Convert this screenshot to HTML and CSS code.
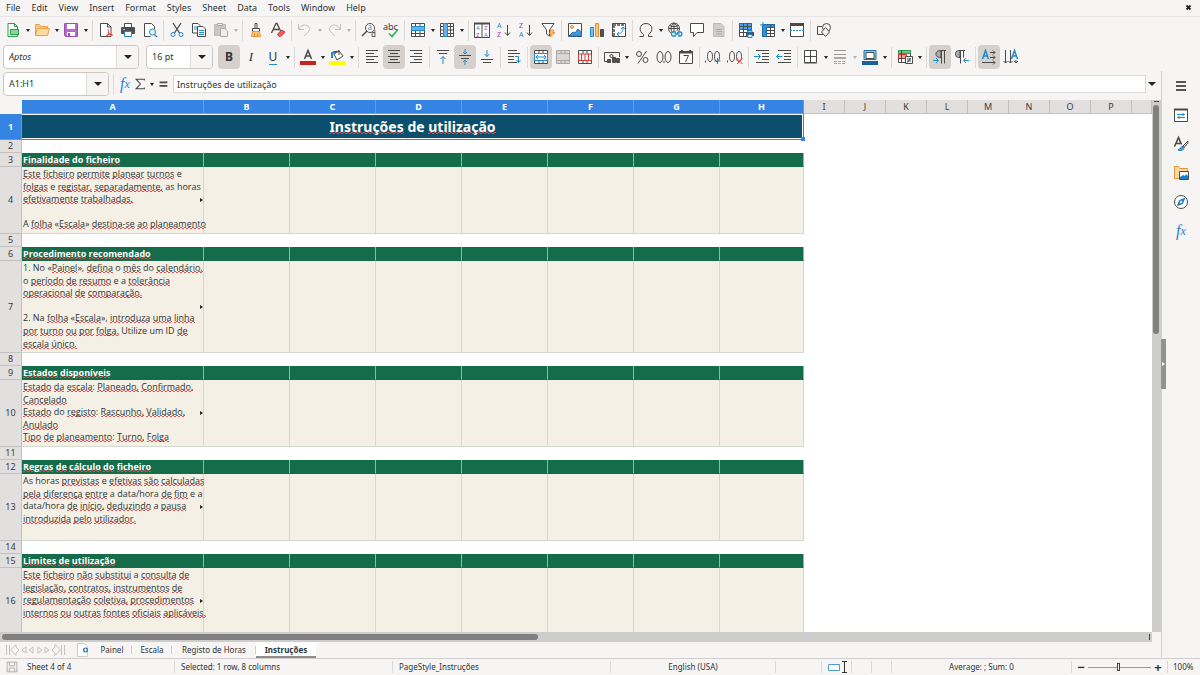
FILE: index.html
```html
<!DOCTYPE html>
<html lang="pt">
<head>
<meta charset="utf-8">
<title>Instruções</title>
<link rel="stylesheet" href="styles.css">
</head>
<body>
<nav class="menubar">
  <button>File</button><button>Edit</button><button>View</button><button>Insert</button><button>Format</button><button>Styles</button><button>Sheet</button><button>Data</button><button>Tools</button><button>Window</button><button>Help</button>
  <button class="close" aria-label="Close document"><svg viewBox="0 0 8 8" width="8" height="8"><path d="M1.500 1.500l4 4M5.500 1.500l-4 4" stroke="#222" stroke-width="1.800"/></svg></button>
</nav>

<div class="toolbar standard" role="toolbar" aria-label="Standard">
  <button class="tool" aria-label="New"><svg class="ico" viewBox="0 0 16 16"><path class="g" fill="#fff" d="M3 1.500h6.500l3 3v10H3z"/><path class="g" d="M9.500 1.500v3h3"/><path fill="#2a9f4a" stroke="none" d="M5 7h9v6H5z"/><path stroke="#fff" d="M6 9h7M6 11h7"/></svg></button><button class="drop" aria-label="New options"></button>
  <button class="tool" aria-label="Open"><svg class="ico" viewBox="0 0 16 16"><path stroke="#e8a04a" fill="#fbc77a" d="M1.500 13.500v-11h4l1.500 2h6.500v2"/><path stroke="#e8a04a" fill="#fddaa0" d="M1.500 13.500l2-7h12l-2 7z"/></svg></button><button class="drop" aria-label="Open options"></button>
  <button class="tool" aria-label="Save"><svg class="ico" viewBox="0 0 16 16"><path stroke="#9b4fb0" fill="#b56bc8" d="M1.500 1.500h13v13h-12l-1-1z"/><path stroke="none" fill="#fff" d="M4 2h8v5H4zM4 10h8v4H4z"/><path stroke="none" fill="#9b4fb0" d="M5 11h2v3H5z"/></svg></button><button class="drop" aria-label="Save options"></button>
  <i class="sep"></i>
  <button class="tool" aria-label="Export PDF"><svg class="ico" viewBox="0 0 16 16"><path fill="#fff" d="M2.500 1.500h7l3.500 3.500v9.500H2.500z"/><path d="M9.500 1.500V5H13"/><path stroke="#e03c3c" d="M10 7c1 2 1 5-2 8M10 10c1 2 3 3 5 3M8 14c2-2 4-2 6-1"/></svg></button>
  <button class="tool" aria-label="Print"><svg class="ico" viewBox="0 0 16 16"><path fill="#fff" d="M4.500 5V1.500h7V5"/><rect x="1" y="5" width="14" height="7" rx="1" fill="#4a4f55" stroke="none"/><path fill="#fff" stroke="#1e8bcd" d="M4.500 9.500h7v5h-7z"/><path stroke="#9ac9ea" d="M3 7.500h2"/></svg></button>
  <button class="tool" aria-label="Print preview"><svg class="ico" viewBox="0 0 16 16"><path fill="#fff" d="M12.500 7V4.500l-3-3h-7v13h6"/><circle class="b" cx="10.500" cy="10" r="3" fill="#e4f2fc"/><path class="b" stroke-width="1.500" d="M12.500 12.500l2.500 2.500"/></svg></button>
  <i class="sep"></i>
  <button class="tool" aria-label="Cut"><svg class="ico" viewBox="0 0 16 16"><path stroke-width="1.300" d="M4 1l6.500 10M12 1L5.500 11"/><circle class="b" cx="4" cy="12.500" r="2"/><circle class="b" cx="12" cy="12.500" r="2"/></svg></button>
  <button class="tool" aria-label="Copy"><svg class="ico" viewBox="0 0 16 16"><path fill="#fff" d="M1.500 1.500h5.500l2 2v7.500H1.500z"/><path fill="#fff" d="M6.500 4.500H12l2.500 2.500v7.500h-8z"/><path class="b" d="M3 5h3M3 7h3M8 8.500h5M8 10.500h5M8 12.500h5"/></svg></button>
  <button class="tool" aria-label="Paste" disabled><svg class="ico" viewBox="0 0 16 16"><path stroke="#bbb" fill="#c9c8c6" d="M1.500 2.500h11v11h-11z"/><path stroke="#aaa" fill="#eee" d="M4.500 1.500h5v2h-5zM7.500 6.500h4l3 2.500v5.500h-7z"/></svg></button><button class="drop" aria-label="Paste options" disabled></button>
  <i class="sep"></i>
  <button class="tool" aria-label="Clone formatting"><svg class="ico" viewBox="0 0 16 16"><path fill="#fff" d="M7 1.500h2v5H7zM4.500 6.500h7v3h-7z"/><path stroke="#e8903a" fill="#fbc77a" d="M4.500 9.500h7l1 5h-9z"/><path stroke="#e8903a" d="M6.500 11v3M9.500 11v3"/></svg></button>
  <button class="tool" aria-label="Clear formatting"><svg class="ico" viewBox="0 0 16 16"><path stroke-width="1.300" d="M1.500 11L6 1.500h1L10.500 9M3 7.500h6"/><path stroke="#d93636" fill="#e86464" d="M7.500 12l4.500-4 3 2-4.500 4.500H9z"/></svg></button>
  <i class="sep"></i>
  <button class="tool" aria-label="Undo" disabled><svg class="ico dim" viewBox="0 0 16 16"><path d="M1.500 2v5.500H7M2 7c2-4 6-5 9-3 3 3 1 6-4 10"/></svg></button><button class="drop" aria-label="Undo options" disabled></button>
  <button class="tool" aria-label="Redo" disabled><svg class="ico dim" viewBox="0 0 16 16"><path d="M14.500 2v5.500H9M14 7c-2-4-6-5-9-3-3 3-1 6 4 10"/></svg></button><button class="drop" aria-label="Redo options" disabled></button>
  <i class="sep"></i>
  <button class="tool" aria-label="Find and replace"><svg class="ico" viewBox="0 0 16 16"><circle cx="9" cy="6" r="4.500" fill="#fff"/><path stroke-width="1.500" d="M6 9l-5 5"/><text class="gb" x="6.500" y="8" font-size="8">a</text><text class="gk" x="10" y="15" font-size="8">d</text></svg></button>
  <button class="tool" aria-label="Spelling"><svg class="ico" viewBox="0 0 16 16"><text class="gk" x="0" y="7.500" font-size="9">abc</text><path stroke="#2fae60" stroke-width="1.600" d="M6 11.500l3 3 6-7"/></svg></button>
  <i class="sep"></i>
  <button class="tool" aria-label="Row"><svg class="ico" viewBox="0 0 16 16"><path fill="#fff" d="M1.500 1.500h13v13h-13z"/><path d="M1.500 11.500h13M1.500 8.500h13M5.500 1.500v13M10 1.500v13"/><path fill="#62b1ea" stroke="#1e8bcd" d="M1.500 4.500h13v4h-13z"/></svg></button><button class="drop" aria-label="Row options"></button>
  <button class="tool" aria-label="Column"><svg class="ico" viewBox="0 0 16 16"><path fill="#fff" d="M1.500 1.500h13v13h-13z"/><path d="M1.500 4.500h13M1.500 8h13M1.500 11.500h13M11.500 1.500v13"/><path fill="#62b1ea" stroke="#1e8bcd" d="M4.500 1.500h4v13h-4z"/></svg></button><button class="drop" aria-label="Column options"></button>
  <i class="sep"></i>
  <button class="tool" aria-label="Sort"><svg class="ico" viewBox="0 0 16 16"><path fill="#fff" d="M.5 1.500h15v14H.5zM8 2v13"/><path stroke-width="2" d="M0 1.500h16"/><text class="gb" x="2" y="8" font-size="6">A</text><text class="gp" x="2" y="15" font-size="6">Z</text><text class="gp" x="10" y="8" font-size="6">Z</text><text class="gb" x="10" y="15" font-size="6">A</text></svg></button>
  <button class="tool" aria-label="Sort ascending"><svg class="ico" viewBox="0 0 16 16"><text class="gb" x="1" y="6" font-size="7">A</text><text class="gp" x="1" y="15" font-size="7">Z</text><path d="M11.500 3v10M9 10.500l2.500 3 2.500-3"/></svg></button>
  <button class="tool" aria-label="Sort descending"><svg class="ico" viewBox="0 0 16 16"><text class="gp" x="1" y="6" font-size="7">Z</text><text class="gb" x="1" y="15" font-size="7">A</text><path d="M11.500 3v10M9 10.500l2.500 3 2.500-3"/></svg></button>
  <button class="tool" aria-label="AutoFilter"><svg class="ico" viewBox="0 0 16 16"><path fill="#fff" d="M2 1.500h12L9.500 8v6l-3-2V8z"/><path stroke="#e8903a" fill="#fbc77a" d="M11 8h3l-1.500 2.500H15L10 15l1-3.500H9.500z"/></svg></button>
  <i class="sep"></i>
  <button class="tool" aria-label="Insert image"><svg class="ico" viewBox="0 0 16 16"><path fill="#fff" d="M1.500 1.500h13v13h-13z"/><circle cx="5" cy="5" r="1.500" fill="#fbc77a" stroke="#e8903a"/><path stroke="#1e6fb0" fill="#3f9be0" d="M2 14l4-4 2 1 3-4 3.500 4v3z"/></svg></button>
  <button class="tool" aria-label="Insert chart"><svg class="ico" viewBox="0 0 16 16"><path fill="#7dbff0" stroke="#1e8bcd" d="M1.500 5.500h3v9h-3z"/><path fill="#fbc77a" stroke="#e8903a" d="M6.500 1.500h3v13h-3z"/><path fill="#555" d="M11.500 7.500h3v7h-3z"/></svg></button>
  <button class="tool" aria-label="Pivot table"><svg class="ico" viewBox="0 0 16 16"><path fill="#fff" d="M1.500 1.500h13v13h-13z"/><path stroke="#777" stroke-width="2" stroke-dasharray="3 1" d="M2 3h12M3 3v11"/><path class="b" d="M6 12c4 0 6-2 6-6M10 7l2-2 2 2M8 10l-2 2 2 2"/></svg></button>
  <i class="sep"></i>
  <button class="tool" aria-label="Special character"><svg class="ico" viewBox="0 0 16 16"><path d="M1.500 14.500h4v-2C0 9 1.500 1.500 8 1.500S16 9 10.500 12.500v2h4"/></svg></button><button class="drop" aria-label="Special character options"></button>
  <button class="tool" aria-label="Hyperlink"><svg class="ico" viewBox="0 0 16 16"><circle cx="7" cy="6.500" r="5.500"/><path d="M1.500 6.500h11M7 1v11M3 3.500c3 1.500 5 1.500 8 0M7 1C3 4 3 9 7 12M7 1c4 3 4 6 3 8"/><path class="b" stroke-width="1.300" fill="#f6f5f4" d="M9 10H6c-2 0-2 4 0 4h3M11 10h2c2.500 0 2.500 4 0 4h-2M7.500 12h5"/></svg></button>
  <button class="tool" aria-label="Comment"><svg class="ico" viewBox="0 0 16 16"><path fill="#fff" d="M1.500 1.500h13v9H8l-3.500 4v-4h-3z"/></svg></button>
  <button class="tool" aria-label="Headers and footers" disabled><svg class="ico" viewBox="0 0 16 16"><path stroke="#bbb" fill="#d0cfcd" d="M2.500 1.500h7.500l3 3v10H2.500z"/><path stroke="#aaa" d="M5 7.500h6M5 9.500h6M5 12h6"/></svg></button>
  <i class="sep"></i>
  <button class="tool" aria-label="Print area"><svg class="ico" viewBox="0 0 16 16"><path fill="#fff" d="M1.500 1.500h12v13h-12z"/><path fill="#4aa3e8" stroke="#1e6fb0" d="M1.500 1.500h12v6h-12z"/><path d="M1.500 4.500h12M1.500 10.500h12M5.500 1.500v13M9.500 1.500v8"/><path fill="#4a4f55" stroke="none" d="M8 10h8v4H8z"/><path fill="#fff" stroke="#1e8bcd" d="M10 12.500h4v3h-4zM10 8.500h4V10h-4z"/></svg></button>
  <button class="tool" aria-label="Freeze rows and columns"><svg class="ico" viewBox="0 0 16 16"><path fill="#fff" d="M2.500 2.500h12v12h-12z"/><path fill="#2f8fdb" stroke="#1a6aa8" d="M2.500 2.500h12v3h-8v9h-4z"/><path d="M6.500 8.500h8M6.500 11.500h8M10.500 2.500v12"/><path class="b" d="M3 0v5M0 3h5"/></svg></button><button class="drop" aria-label="Freeze options"></button>
  <button class="tool" aria-label="Split window"><svg class="ico" viewBox="0 0 16 16"><path fill="#fff" d="M1.500 2v12.500h13V2"/><path stroke-width="3" d="M1 2.500h14"/><path class="b" stroke-dasharray="2 1" d="M1 8.500h14"/></svg></button>
  <i class="sep"></i>
  <button class="tool" aria-label="Show draw functions"><svg class="ico" viewBox="0 0 16 16"><path d="M7 12.500H1.500v-8H6"/><circle cx="10.500" cy="5.500" r="4"/><path fill="#f6f5f4" d="M9.500 5.500l4 4.500-4 4.500L5.500 10z"/></svg></button>
</div>

<div class="toolbar formatting" role="toolbar" aria-label="Formatting">
  <div class="combo font"><input aria-label="Font name" value="Aptos"><button aria-label="Choose font"></button></div>
  <div class="combo size"><input aria-label="Font size" value="16 pt"><button aria-label="Choose size"></button></div>
  <button class="tool on bold" aria-label="Bold">B</button>
  <button class="tool italic" aria-label="Italic">I</button>
  <button class="tool under" aria-label="Underline"><span>U</span></button><button class="drop" aria-label="Underline options"></button>
  <i class="sep"></i>
  <button class="tool" aria-label="Font colour"><svg class="ico" viewBox="0 0 16 16"><path stroke-width="1.500" d="M4.500 10L8 1.500 11.500 10M5.500 7h5"/><path stroke="none" fill="#c9211e" d="M0 12h16v4H0z"/></svg></button><button class="drop" aria-label="Font colour options"></button>
  <button class="tool" aria-label="Highlighting"><svg class="ico" viewBox="0 0 16 16"><path class="b" stroke-width="2" d="M3 9V4l4-1"/><path fill="#fff" d="M5 5l5-3 4 5-6 4z"/><path d="M10 1v5M4 3l6-1"/><path stroke="none" fill="#ff0" d="M0 12h16v4H0z"/></svg></button><button class="drop" aria-label="Highlighting options"></button>
  <i class="sep"></i>
  <button class="tool" aria-label="Align left"><svg class="ico" viewBox="0 0 16 16"><path d="M2 1.500h12M2 4.500h8M2 7.500h12M2 10.500h8M2 13.500h12"/></svg></button>
  <button class="tool on" aria-label="Align centre"><svg class="ico" viewBox="0 0 16 16"><path d="M2 1.500h12M4 4.500h8M2 7.500h12M4 10.500h8M2 13.500h12"/></svg></button>
  <button class="tool" aria-label="Align right"><svg class="ico" viewBox="0 0 16 16"><path d="M2 1.500h12M6 4.500h8M2 7.500h12M6 10.500h8M2 13.500h12"/></svg></button>
  <i class="sep"></i>
  <button class="tool" aria-label="Align top"><svg class="ico" viewBox="0 0 16 16"><path d="M2 1.500h12M4 4.500h8"/><path class="b" d="M8 15V7.500M5.500 10L8 7.500l2.500 2.500"/></svg></button>
  <button class="tool on" aria-label="Centre vertically"><svg class="ico" viewBox="0 0 16 16"><path d="M2 6.500h12M4 9.500h8"/><path class="b" d="M8 0v5M6 3l2 2 2-2M8 16v-5M6 13l2-2 2 2"/></svg></button>
  <button class="tool" aria-label="Align bottom"><svg class="ico" viewBox="0 0 16 16"><path d="M2 10.500h12M4 13.500h8"/><path class="b" d="M8 1v6.500M5.500 5L8 7.500 10.500 5"/></svg></button>
  <i class="sep"></i>
  <button class="tool" aria-label="Wrap text"><svg class="ico" viewBox="0 0 16 16"><path d="M2 1.500h9M2 4.500h12M2 7.500h6M2 10.500h6M2 13.500h9"/><path class="b" d="M9 7.500h3.500V13M10.500 11l2 2.500 2-2.500"/></svg></button>
  <i class="sep"></i>
  <button class="tool on" aria-label="Merge and centre cells"><svg class="ico" viewBox="0 0 16 16"><path fill="#fff" d="M1.500 1.500h13v13h-13z"/><path d="M1.500 4.500h13M1.500 11.500h13M6 1.500v3M10 1.500v3M6 11.500v3M10 11.500v3"/><path class="b" fill="#fff" d="M1.500 4.500h13v7h-13z"/><path class="b" d="M3 8h10M5 6L3 8l2 2M11 6l2 2-2 2"/></svg></button>
  <button class="tool" aria-label="Merge cells" disabled><svg class="ico" viewBox="0 0 16 16"><path stroke="#a8a7a5" fill="#d8d7d5" d="M1.500 1.500h13v13h-13zM1.500 4.500h13M1.500 11.500h13M6 1.500v3M10 1.500v3M6 11.500v3M10 11.500v3"/></svg></button>
  <button class="tool" aria-label="Unmerge cells"><svg class="ico" viewBox="0 0 16 16"><path fill="#fff" d="M1.500 1.500h13v13h-13zM6 1.500v13M10 1.500v13"/><path stroke="#d93636" fill="#fff" d="M1.500 5h13v6.500h-13zM4.500 5v6.500M8 5v6.500M11.500 5v6.500"/></svg></button>
  <i class="sep"></i>
  <button class="tool" aria-label="Currency"><svg class="ico" viewBox="0 0 16 16"><path d="M6 12.500H.5v-9h15V8"/><circle cx="7.500" cy="7" r="1.500"/><path fill="#555" d="M3.500 10.500h3v3h-3zM8.500 8.500h3v5h-3zM12.500 9.500h3v4h-3z"/></svg></button><button class="drop wide" aria-label="Currency options"></button>
  <button class="tool" aria-label="Percent"><svg class="ico" viewBox="0 0 16 16"><circle cx="5" cy="5" r="2.500"/><circle cx="11.500" cy="11" r="2.500"/><path d="M12.500 2L4 14.500"/></svg></button>
  <button class="tool" aria-label="Number"><svg class="ico" viewBox="0 0 16 16"><ellipse cx="4" cy="8" rx="3" ry="5.500"/><ellipse cx="12" cy="8" rx="3" ry="5.500"/><path d="M8 12v2"/></svg></button>
  <button class="tool" aria-label="Date"><svg class="ico" viewBox="0 0 16 16"><path fill="#fff" d="M1.500 2.500h13v12h-13z"/><path stroke-width="2" d="M1 3.500h14M4 1v2M12 1v2"/><path d="M5.500 6.500h5l-3 6.500"/></svg></button>
  <i class="sep"></i>
  <button class="tool" aria-label="Add decimal place"><svg class="ico" viewBox="0 0 16 16"><ellipse cx="5" cy="7.500" rx="2.500" ry="5"/><ellipse cx="12" cy="7.500" rx="2.500" ry="5"/><path d="M.5 11.500v2"/><path class="b" d="M12.500 9v6M9.500 12h6"/></svg></button>
  <button class="tool" aria-label="Delete decimal place"><svg class="ico" viewBox="0 0 16 16"><ellipse cx="5" cy="7.500" rx="2.500" ry="5"/><ellipse cx="12" cy="7.500" rx="2.500" ry="5"/><path d="M.5 11.500v2"/><path stroke="#e03c3c" d="M10 9.500l5.500 5.500M15.500 9.500L10 15"/></svg></button>
  <i class="sep"></i>
  <button class="tool" aria-label="Increase indent"><svg class="ico" viewBox="0 0 16 16"><path d="M2 1.500h13M8 4.500h7M8 7.500h7M8 10.500h7M2 13.500h13"/><path class="b" d="M0 7.500h6M4 5l2.500 2.500L4 10"/></svg></button>
  <button class="tool" aria-label="Decrease indent"><svg class="ico" viewBox="0 0 16 16"><path d="M2 1.500h13M8 4.500h7M8 7.500h7M8 10.500h7M2 13.500h13"/><path class="b" d="M.5 7.500h6M3 5L.5 7.500 3 10"/></svg></button>
  <i class="sep"></i>
  <button class="tool" aria-label="Borders"><svg class="ico" viewBox="0 0 16 16"><path fill="#fff" d="M1.500 1.500h12v12h-12zM7.500 1.500v12M1.500 7.500h12"/><path stroke="#e8903a" d="M1 14.500h13"/></svg></button><button class="drop" aria-label="Borders options"></button>
  <button class="tool" aria-label="Border style" disabled><svg class="ico" viewBox="0 0 16 16"><path stroke="#999" d="M2 1.500h12M2 5.500h12"/><path stroke="#aaa" stroke-width="2" d="M2 9h12"/><path stroke="#aaa" stroke-dasharray="3 1" d="M2 12.500h12M2 14.500h12"/></svg></button><button class="drop wide" aria-label="Border style options" disabled></button>
  <button class="tool" aria-label="Border colour"><svg class="ico" viewBox="0 0 16 16"><path stroke="none" fill="#1a5fa0" d="M0 12h16v4H0z"/><path stroke="#1e6fb0" fill="#9ac9ea" d="M2 1.500h12v9H2z"/><path fill="#fff" d="M4 3.500h8v6H4z"/></svg></button><button class="drop" aria-label="Border colour options"></button>
  <i class="sep"></i>
  <button class="tool" aria-label="Conditional formatting"><svg class="ico" viewBox="0 0 16 16"><path fill="#fff" d="M1.500 1.500h12v12h-12z"/><path fill="#6cc48a" stroke="#2a9f4a" d="M1.500 1.500h12v3h-12z"/><path fill="#f4a0a0" stroke="#d93636" d="M1.500 5.500h8v4h-8z"/><path d="M4.500 1.500v12M1.500 9.500h6"/><path fill="#fff" d="M8.500 7.500h7v7h-7z"/><path d="M10 10h4M10 12h4M13.500 9l-3 4.500"/></svg></button><button class="drop" aria-label="Conditional options"></button>
  <i class="sep"></i>
  <button class="tool on" aria-label="Left to right"><svg class="ico" viewBox="0 0 16 16"><path fill="#aaa" d="M9 1.500v7C5 8.500 4 7 4 5s1-3.500 5-3.500z"/><path d="M8 1.500h6M9.500 1.500v13M12.500 1.500v13"/><path class="b" d="M1 11.500h5M4 9l2.500 2.500L4 14"/></svg></button>
  <button class="tool" aria-label="Right to left"><svg class="ico" viewBox="0 0 16 16"><path fill="#aaa" d="M6 1.500v7C2 8.500 1.500 7 1.500 5s.5-3.500 4.500-3.500z"/><path d="M5 1.500h6M6.500 1.500v13M9.500 1.500v7"/><path class="b" d="M10 11.500h5M12 9l-2.500 2.500L12 14"/></svg></button>
  <i class="sep"></i>
  <button class="tool on" aria-label="Text left to right"><svg class="ico" viewBox="0 0 16 16"><path class="b" stroke-width="1.500" d="M1.500 10L4.500 1.500 7.500 10M2.500 7h4"/><path d="M9 3.500h5M12 1.500l2 2-2 2M9 8.500h5M12 6.500l2 2-2 2M1 13.500h13M12 11.500l2 2-2 2"/></svg></button>
  <button class="tool" aria-label="Text top to bottom"><svg class="ico" viewBox="0 0 16 16"><path class="b" stroke-width="1.500" d="M8.500 10l3-8.500 3 8.500M9.500 7h4"/><path d="M2.500 1v13M.5 12l2 2 2-2M7.500 1v13M5.500 12l2 2 2-2M13 11v3M11 12l2 2 2-2"/></svg></button>
</div>

<div class="work">
  <main>
    <div class="formula-bar">
      <div class="combo name"><input aria-label="Name box" value="A1:H1"><button aria-label="Choose range"></button></div>
      <i class="sep"></i>
      <button class="fx" aria-label="Function wizard">f<sub>x</sub></button>
      <button class="mini" aria-label="Sum"><svg class="ico" viewBox="0 0 16 16"><path stroke-width="1.200" d="M13 4V2.500H3.500l5 5.500-5 5.500H13V12"/></svg></button><button class="drop" aria-label="Sum options"></button>
      <button class="mini equals" aria-label="Formula"><svg class="ico" viewBox="0 0 16 16"><path stroke-width="2" d="M4 6h9M4 10h9"/></svg></button>
      <input class="formula" aria-label="Formula input" value="Instruções de utilização">
      <button class="expand" aria-label="Expand formula bar"></button>
    </div>
    <div class="sheet">
      <div class="grid">
        <table>
          <colgroup><col class="c-num"><col class="c-first"><col class="c-wide" span="6"><col class="c-last"><col class="c-std" span="8"><col></colgroup>
          <thead><tr><th class="corner"></th><th class="sel">A</th><th class="sel">B</th><th class="sel">C</th><th class="sel">D</th><th class="sel">E</th><th class="sel">F</th><th class="sel">G</th><th class="sel">H</th><th>I</th><th>J</th><th>K</th><th>L</th><th>M</th><th>N</th><th>O</th><th>P</th><th></th></tr></thead>
          <tbody>
            <tr class="title"><th class="sel">1</th><td colspan="8"><u>Instruções</u> de <u>utilização</u></td></tr>
            <tr class="gap"><th>2</th></tr>
            <tr class="head"><th>3</th><td><u>Finalidade</u> do <u>ficheiro</u></td><td></td><td></td><td></td><td></td><td></td><td></td><td></td></tr>
            <tr class="body"><th>4</th><td><u>Este</u> <u>ficheiro</u> <u>permite</u> <u>planear</u> <u>turnos</u> e<br><u>folgas</u> e <u>registar,</u> <u>separadamente,</u> as horas<br><u>efetivamente</u> <u>trabalhadas.</u><br><br>A <u>folha</u> «<u>Escala</u>» <u>destina-se</u> <u>ao</u> <u>planeamento</u></td><td></td><td></td><td></td><td></td><td></td><td></td><td></td></tr>
            <tr class="gap"><th>5</th></tr>
            <tr class="head"><th>6</th><td><u>Procedimento</u> <u>recomendado</u></td><td></td><td></td><td></td><td></td><td></td><td></td><td></td></tr>
            <tr class="body tall"><th>7</th><td>1. No «<u>Painel</u>», <u>defina</u> o <u>mês</u> do <u>calendário,</u><br>o <u>período</u> <u>de</u> <u>resumo</u> e a <u>tolerância</u><br><u>operacional</u> <u>de</u> <u>comparação.</u><br><br>2. Na <u>folha</u> «<u>Escala</u>», <u>introduza</u> <u>uma</u> <u>linha</u><br><u>por</u> <u>turno</u> <u>ou</u> <u>por</u> <u>folga.</u> Utilize um ID <u>de</u><br><u>escala</u> <u>único.</u></td><td></td><td></td><td></td><td></td><td></td><td></td><td></td></tr>
            <tr class="gap"><th>8</th></tr>
            <tr class="head"><th>9</th><td><u>Estados</u> <u>disponíveis</u></td><td></td><td></td><td></td><td></td><td></td><td></td><td></td></tr>
            <tr class="body"><th>10</th><td><u>Estado</u> <u>da</u> <u>escala</u>: <u>Planeado,</u> <u>Confirmado,</u><br><u>Cancelado</u><br><u>Estado</u> do <u>registo</u>: <u>Rascunho,</u> <u>Validado,</u><br><u>Anulado</u><br><u>Tipo</u> <u>de</u> <u>planeamento</u>: <u>Turno,</u> <u>Folga</u></td><td></td><td></td><td></td><td></td><td></td><td></td><td></td></tr>
            <tr class="gap"><th>11</th></tr>
            <tr class="head"><th>12</th><td><u>Regras</u> <u>de</u> <u>cálculo</u> <u>do</u> <u>ficheiro</u></td><td></td><td></td><td></td><td></td><td></td><td></td><td></td></tr>
            <tr class="body"><th>13</th><td>As horas <u>previstas</u> e <u>efetivas</u> <u>são</u> <u>calculadas</u><br><u>pela</u> <u>diferença</u> <u>entre</u> a data/hora <u>de</u> <u>fim</u> e a<br>data/hora <u>de</u> <u>início,</u> <u>deduzindo</u> a <u>pausa</u><br><u>introduzida</u> <u>pelo</u> <u>utilizador.</u></td><td></td><td></td><td></td><td></td><td></td><td></td><td></td></tr>
            <tr class="gap"><th>14</th></tr>
            <tr class="head"><th>15</th><td><u>Limites</u> <u>de</u> <u>utilização</u></td><td></td><td></td><td></td><td></td><td></td><td></td><td></td></tr>
            <tr class="body"><th>16</th><td><u>Este</u> <u>ficheiro</u> <u>não</u> <u>substitui</u> a <u>consulta</u> <u>de</u><br><u>legislação,</u> <u>contratos,</u> <u>instrumentos</u> <u>de</u><br><u>regulamentação</u> <u>coletiva,</u> <u>procedimentos</u><br><u>internos</u> <u>ou</u> <u>outras</u> <u>fontes</u> <u>oficiais</u> <u>aplicáveis.</u></td><td></td><td></td><td></td><td></td><td></td><td></td><td></td></tr>
          </tbody>
        </table>
      </div>
      <div class="vscroll"><span></span></div>
    </div>
    <div class="hscroll"><span></span></div>
    <div class="tabs">
      <svg class="navs" viewBox="0 0 60 12" width="60" height="12"><path fill="none" stroke="#c4c3c1" d="M.5 1v10M3.500 1v10M10 .5L4.500 6l5.500 5.500V9l3-3-3-3zM20 3l-4 3 4 3zM27 3l-4 3 4 3zM32 3l4 3-4 3zM39 3l4 3-4 3zM49 .5L54.500 6 49 11.500V9l-3-3 3-3zM55.500 1v10M58.500 1v10"/></svg>
      <button class="add" aria-label="Add sheet"><svg viewBox="0 0 14 14" width="14" height="14"><path fill="#fff" stroke="#ccc" d="M1.500 .5h7l3 3v10h-10z"/><circle cx="9.500" cy="7" r="2.500" fill="#2a72b8"/><path stroke="#fff" d="M8 7h3M9.500 5.500v3"/></svg></button>
      <button>Painel</button><button>Escala</button><button class="long">Registo de Horas</button><button class="active">Instruções</button>
    </div>
  </main>
  <aside>
    <button class="grip" aria-label="Hide sidebar"></button>
    <button aria-label="Sidebar settings"><svg class="ico" viewBox="0 0 16 16"><path stroke="#222" stroke-width="1.500" d="M3 4h10M3 8h10M3 12h10"/></svg></button>
    <button aria-label="Properties"><svg class="ico" viewBox="0 0 16 16"><path fill="#fff" d="M1.500 2v12.500h13V2"/><path stroke-width="2" d="M1 2.500h14"/><path class="b" d="M4 7.500h8M4 10.500h8M10 6v3M6 9v3"/></svg></button>
    <button aria-label="Styles"><svg class="ico" viewBox="0 0 16 16"><path stroke-width="1.600" d="M1.500 10.500L5.500 1.500l3 7M3 7.500h5"/><path fill="#fff" d="M15 5l-5 5 1 1.500 4-4.500z"/><path stroke="#1e6fb0" fill="#4aa3e8" d="M10 10.500l1 1c0 3-4 3.500-6 2.500 2-.5 2-3 5-3.500z"/></svg></button>
    <button aria-label="Gallery"><svg class="ico" viewBox="0 0 16 16"><path stroke="#e8903a" fill="#fddaa0" d="M1.500 13.500V1.500h4l1 2h8v3l-9 7z"/><path fill="#fff" d="M6.500 6.500h9v8h-9z"/><path stroke="none" fill="#1e7fd0" d="M7 14v-2l3-2 2 1 1-2 2 2v3z"/></svg></button>
    <button aria-label="Navigator"><svg class="ico" viewBox="0 0 16 16"><circle cx="8" cy="8" r="6.500" fill="#fff"/><path stroke="#1e6fb0" fill="#3f9be0" d="M11.500 4.500L9.500 9.500l-5 2 2-5z"/><circle cx="8" cy="8" r="1" fill="#fff" stroke="none"/></svg></button>
    <button class="fx" aria-label="Functions">f<sub>x</sub></button>
  </aside>
</div>

<footer>
  <span class="save"><svg class="ico" viewBox="0 0 16 16"><path stroke="#999" d="M1.500 1.500h13v13h-13zM4.500 1.500v5h7v-5M4.500 14.500v-5h7v5"/></svg></span>
  <span>Sheet 4 of 4</span>
  <span class="cell">Selected: 1 row, 8 columns</span>
  <span class="cell">PageStyle_Instruções</span>
  <span class="cell mid">English (USA)</span>
  <span class="cell"></span>
  <span class="cell"><svg class="mode" viewBox="0 0 20 12" width="20" height="12"><path fill="#fff" stroke="#4a9fd0" d="M.5 3.500h11v6H.5z"/><path fill="none" stroke="#333" d="M14 .5h5M14 11.500h5M16.500 .5v11"/></svg></span>
  <span class="cell"></span>
  <span class="cell"></span>
  <span class="cell mid">Average: ; Sum: 0</span>
  <span class="cell zoom"><button aria-label="Zoom out">−</button><input type="range" aria-label="Zoom" min="0" max="100" value="49"><button aria-label="Zoom in">+</button></span>
  <span class="cell pct">100%</span>
</footer>
</body>
</html>
```
FILE: styles.css
```css
* { box-sizing: border-box; }
body {
  margin: 0;
  height: 100vh;
  display: flex;
  flex-direction: column;
  overflow: hidden;
  background: #f6f5f4;
  color: #2e3436;
  font: 9px/12px "Noto Sans", sans-serif;
}
button, input { font: inherit; color: inherit; margin: 0; padding: 0; border: 0; background: none; }
button { display: flex; align-items: center; justify-content: center; flex: none; }
input { min-width: 0; outline: 0; }

.menubar { display: flex; height: 17px; align-items: center; padding-left: 6px; gap: 11px; border-bottom: 1px solid #e6e5e3; }
.menubar .close { margin-left: auto; width: 22px; height: 16px; }

.toolbar { display: flex; align-items: center; flex: none; padding-left: 2px; }
.standard { height: 26px; }
.formatting { height: 28px; }
.tool { width: 22px; height: 24px; border-radius: 4px; }
.on { background: #d5d0cc; }
.drop { width: 7px; height: 24px; }
.drop.wide { width: 8px; }
.drop::after, .combo button::after, .expand::after { content: ""; border: 2px solid transparent; border-top: 3px solid #222; border-bottom: 0; }
.combo button::after, .expand::after { border-width: 4px 4px 0; }
.drop:disabled::after { border-top-color: #b5b3b0; }
.sep { flex: none; width: 5px; height: 21px; background: linear-gradient(#dddbd9, #dddbd9) center / 1px 100% no-repeat; }
.drop + .sep { width: 6px; }
.ico { width: 16px; height: 16px; fill: none; stroke: #4a4a48; stroke-width: 1; overflow: visible; }
.ico text { stroke: none; font-family: "Noto Sans", sans-serif; }
.ico .b { stroke: #1e8bcd; }
.ico .g { stroke: #2a9f4a; }
.ico .gb { fill: #1e8bcd; }
.ico .gk { fill: #3a3a38; }
.ico .gp { fill: #a33bb5; }
.ico.dim { stroke: #c2c0bd; }
.bold { font-size: 12px; font-weight: 700; }
.italic { font: italic 13px "Liberation Serif", serif; }
.under { font-size: 12px; }
.under span { border-bottom: 1px solid #1e8bcd; line-height: 14px; }

.combo { display: flex; height: 24px; border: 1px solid #cdc7c2; border-radius: 4px; background: #fff; overflow: hidden; }
.combo input { flex: 1; padding-left: 5px; }
.combo button { width: 22px; background: #f6f5f4; border-left: 1px solid #dedbd8; }
.font { width: 136px; margin: 0 7px 0 1px; }
.font input { font-style: italic; }
.size { width: 67px; margin-right: 5px; }
.name { width: 106px; }

.work { flex: 1; display: flex; min-height: 0; }
main { flex: 1; min-width: 0; display: flex; flex-direction: column; }
.formula-bar { display: flex; align-items: center; height: 29px; padding: 0 3px 3px; flex: none; }
.formula-bar .sep { width: 9px; }
.fx { font: italic 16px/16px "Liberation Serif", serif; color: #1e7fd0; }
.fx sub { font-size: 12px; line-height: 8px; }
.formula-bar .fx { width: 14px; height: 20px; }
.mini { width: 16px; height: 20px; }
.mini .ico { width: 14px; height: 14px; }
.equals { margin-right: 2px; }
.formula { flex: 1; height: 18px; padding-left: 3px; border: 1px solid #dcdad8; background: #fff; }
.expand { width: 12px; height: 18px; }

.sheet { flex: 1; display: flex; min-height: 0; }
.grid { flex: 1; min-width: 0; overflow: hidden; background: #fff; }
table { width: 100%; min-width: 1152px; table-layout: fixed; border-spacing: 0; }
.c-num { width: 22px; }
.c-first { width: 182px; }
.c-wide { width: 86px; }
.c-last { width: 84px; }
.c-std { width: 41px; }
th, td { padding: 0; }
th { background: #e1e0df; border: solid #c2c1bf; border-width: 0 1px 1px 0; font-weight: 400; color: #3c3c3c; }
thead tr { height: 14px; }
thead .corner { background: #f6f5f4; border-color: #f6f5f4; }
th.sel { background: #3584e4; border-color: #5b9bea; color: #fff; font-weight: 700; }
/* spelling marks: two rows of short dashes, offset into a zigzag */
u {
  text-decoration: none;
  background:
    linear-gradient(90deg, #e05050 2px, transparent 2px) 0 calc(100% - 1px) / 4px 1px repeat-x,
    linear-gradient(90deg, transparent 2px, #e05050 2px) 0 calc(100% - 2px) / 4px 1px repeat-x;
}
td { white-space: nowrap; border-right: 1px solid #d3d9d0; border-bottom: 1px solid #d3d9d0; }
.title { height: 26px; }
.title td { background: #0b4f6c; border-color: #3584e4; box-shadow: inset 0 1px #fff, inset -1px -1px #fff; color: #fff; font-size: 14px; line-height: 20px; font-weight: 700; text-align: center; position: relative; }
.title td::after { content: ""; position: absolute; right: -2px; bottom: -2px; width: 4px; height: 4px; background: #3584e4; }
.title u { background-position: 0 calc(100% - 2px), 0 calc(100% - 3px); }
.gap { height: 13px; }
.head { height: 14px; }
.head td { background: #156c4a; border-right-color: #8fb9a6; border-bottom-color: #156c4a; color: #fff; font-family: "Open Sans", sans-serif; font-weight: 700; padding-left: 1px; }
.body { height: 67px; }
.tall { height: 92px; }
.body td { background: #f5f0e5; padding: 1px 0 0 1px; vertical-align: top; font-family: "Open Sans", sans-serif; line-height: 1.4; }
.body th + td { position: relative; z-index: 1; }
.body th + td::after { content: ""; position: absolute; right: 0; top: calc(50% - 2px); border: 2px solid transparent; border-left: 3px solid #222; border-right: 0; }

.vscroll { width: 9px; background: linear-gradient(#444, #444) 2px 1px / 5px 1px no-repeat #cdcdcc; padding: 5px 2px 0 1px; }
.vscroll span { display: block; height: 43.5%; border-radius: 3px; background: #808080; }
.hscroll { flex: none; height: 10px; margin-right: 9px; background: linear-gradient(#444, #444) right 2px center / 1px 6px no-repeat #cdcdcc; padding: 2px 2px; }
.hscroll span { display: block; width: 46.7%; height: 6px; border-radius: 3px; background: #808080; }

.tabs { display: flex; flex: none; height: 16px; padding-left: 6px; font-size: 8px; }
.navs { margin: 2px 8px 0 0; }
.tabs button { width: 40px; height: 16px; background: linear-gradient(#d0cfcd, #d0cfcd) right center / 1px 8px no-repeat; }
.tabs .add { width: 18px; background: none; }
.tabs .long { width: 84px; }
.tabs .active { width: 60px; background: #fff; border-bottom: 2px solid #8e8e8c; padding-top: 1px; font-weight: 700; }

aside { position: relative; flex: none; width: 39px; border-left: 1px solid #cfcecc; display: flex; flex-direction: column; align-items: center; gap: 9px; padding-top: 5px; }
aside button { width: 22px; height: 20px; }
aside .grip { position: absolute; left: -1px; top: 268px; width: 5px; height: 50px; background: #929292; }
.grip::after { content: ""; border: 2px solid transparent; border-left: 3px solid #fff; border-right: 0; }

footer { flex: none; height: 17px; border-top: 1px solid #d0cfcd; display: grid; grid-template-columns: 27px 147fr 218fr 218fr 165fr 46fr 30fr 20fr 20fr 180fr 96px 33px; align-items: center; font-size: 8px; }
footer .save { padding-left: 6px; }
footer .ico { width: 12px; height: 12px; display: block; }
.cell { height: 12px; border-left: 1px solid #dcdad8; padding-left: 6px; white-space: nowrap; }
.mid { text-align: center; padding: 0; }
.mode { display: block; }
.zoom { display: flex; align-items: center; padding: 0 2px; }
.zoom button { width: 14px; font-size: 13px; font-weight: 700; }
.zoom input { flex: 1; appearance: none; height: 1px; background: #999; }
.zoom input::-webkit-slider-thumb { appearance: none; width: 3px; height: 8px; border: 1px solid #444; background: #fff; }
.pct { padding-left: 5px; }
```
